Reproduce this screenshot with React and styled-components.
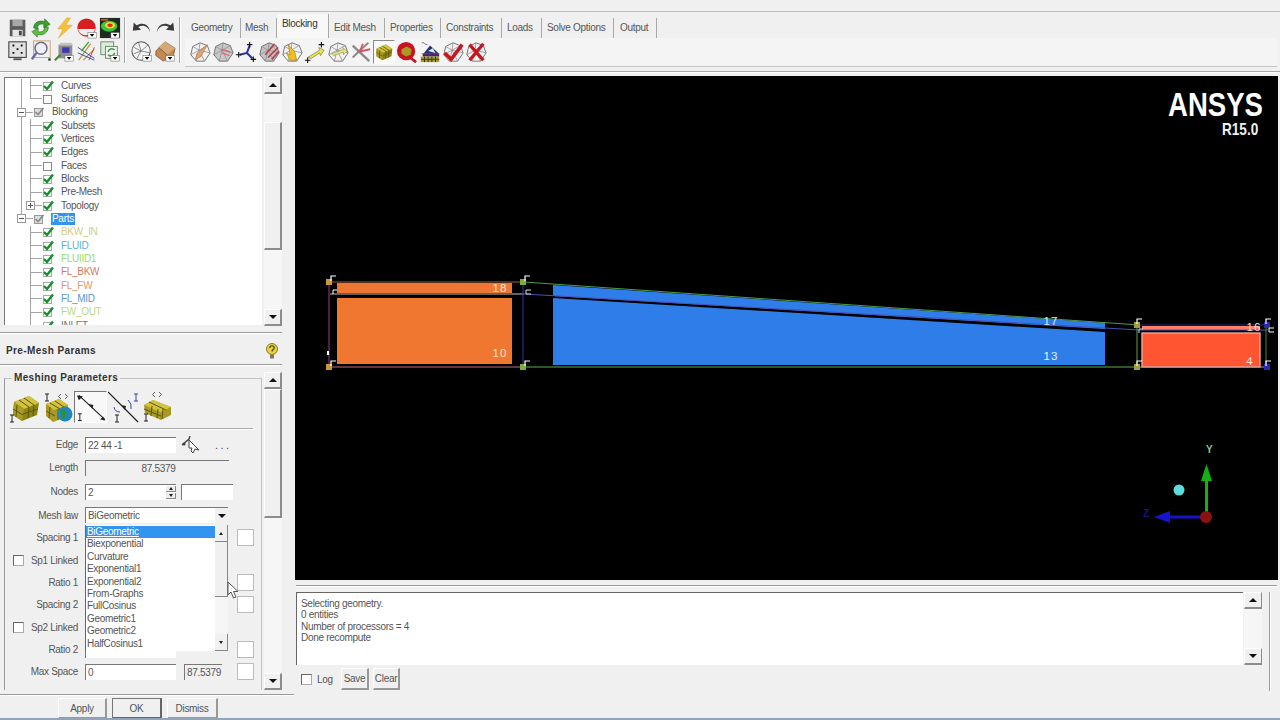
import React from 'react';
import styled, { createGlobalStyle } from 'styled-components';

const GlobalStyle = createGlobalStyle`
  html, body { margin: 0; padding: 0; background: #f0f0f0; }
  body { font-family: "Liberation Sans", Arial, sans-serif; font-size: 10px; letter-spacing: -0.3px; color: #4a4a4a; overflow: hidden; }
  * { box-sizing: border-box; }
`;

const Page = styled.div`
  width: 1280px;
  height: 720px;
  display: grid;
  grid-template-rows: 76px 642px 2px;
  overflow: hidden;
  background: #f0f0f0;
`;

/* ---------- top toolbar ---------- */
const TopBar = styled.div`
  margin-top: 11px;
  height: 61px;
  border-top: 1px solid #bcbcbc;
  border-bottom: 1px solid #a8a8a8;
  box-shadow: 0 1px 0 #fff;
  display: flex;
  padding-left: 6px;
`;
const IconGrid = styled.div`
  display: grid;
  grid-template-columns: repeat(${p => p.$cols}, 23px);
  grid-auto-rows: 23px;
  padding-top: 4px;
`;
const ToolBtn = styled.div`
  display: flex;
  align-items: center;
  justify-content: center;
  position: relative;
`;
const VSep = styled.div`
  width: 1px;
  height: 46px;
  margin: 5px ${p => p.$right}px 0 3px;
  background: #a6a6a6;
  box-shadow: 1px 0 0 #fff;
`;
const Ribbon = styled.div`
  display: flex;
  flex-direction: column;
`;
const TabBar = styled.div`
  display: flex;
  height: 26px;
  align-items: center;
  padding-top: 5px;
`;
const Tab = styled.div`
  width: ${p => p.$w}px;
  height: 20px;
  line-height: 20px;
  padding-left: ${p => p.$pad}px;
  border-right: 1px solid #a8a8a8;
  color: #555;
  white-space: nowrap;
  ${p => p.$active && `
    background: #f8f8f8;
    color: #333;
    margin-top: -4px;
    height: 24px;
    line-height: 20px;
  `}
`;
const RibbonIcons = styled.div`
  display: flex;
  gap: 1px;
  padding-left: 4px;
  height: 29px;
  width: 1092px;
  align-items: center;
  background: #f4f4f4;
  border-bottom: 1px solid #c4c4c4;
`;
const RibbonBtn = styled.div`
  width: 22px;
  height: 24px;
  display: flex;
  align-items: center;
  justify-content: center;
  ${p => p.$active && `border: 1px solid #888; border-right-color: #fff; border-bottom-color: #fff; background: #fafafa;`}
`;

/* ---------- main columns ---------- */
const Main = styled.div`
  display: grid;
  grid-template-columns: 295px 983px 2px;
  min-height: 0;
`;
const LeftCol = styled.div`
  display: flex;
  flex-direction: column;
  min-height: 0;
`;
const RightCol = styled.div`
  display: flex;
  flex-direction: column;
  min-height: 0;
`;
const HDivider = styled.div`
  height: 1px;
  margin: ${p => p.$top || 0}px ${p => p.$right || 13}px 0 ${p => p.$left || 0}px;
  background: #9a9a9a;
  box-shadow: 0 1px 0 #fff;
  flex: none;
`;

/* ---------- scrollbars ---------- */
const Scroll = styled.div`
  width: 18px;
  display: flex;
  flex-direction: column;
  background: #f6f6f6;
  flex: none;
`;
const ScrollBtn = styled.div`
  height: 17px;
  flex: none;
  display: flex;
  align-items: center;
  justify-content: center;
  background: #f0f0f0;
  border-top: 1px solid #fff;
  border-left: 1px solid #fff;
  border-right: 2px solid #8c8c8c;
  border-bottom: 2px solid #8c8c8c;
`;
const ScrollGap = styled.div`
  height: ${p => p.$h}px;
  flex: ${p => (p.$h ? 'none' : 1)};
`;
const ScrollThumb = styled.div`
  height: ${p => p.$h}px;
  flex: none;
  background: #f0f0f0;
  border-top: 1px solid #fff;
  border-left: 1px solid #fff;
  border-right: 2px solid #8c8c8c;
  border-bottom: 2px solid #8c8c8c;
`;
const Arrow = styled.div`
  width: 0;
  height: 0;
  border-left: 4px solid transparent;
  border-right: 4px solid transparent;
  ${p => (p.$up ? 'border-bottom: 4px solid #111;' : 'border-top: 4px solid #111;')}
`;

/* ---------- tree ---------- */
const TreeArea = styled.div`
  display: flex;
  gap: 2px;
  height: 250px;
  padding: 1px 0 0 4px;
  flex: none;
`;
const TreeBox = styled.div`
  width: 258px;
  height: 248px;
  padding-top: 1px;
  background: #fff;
  border-top: 1px solid #777;
  border-left: 1px solid #777;
  overflow: hidden;
`;
const line = (x, y, w, h) => `linear-gradient(#a4a4a4, #a4a4a4) ${x}px ${y} / ${w} ${h} no-repeat`;
const TreeRow = styled.div`
  height: 13.33px;
  display: flex;
  align-items: center;
  background: ${p => {
    const layers = [];
    if (p.$outer === 'full') layers.push(line(16, '0', '1px', '100%'));
    if (p.$outer === 'half') layers.push(line(16, '0', '1px', '50%'));
    if (p.$inner === 'full') layers.push(line(25, '0', '1px', '100%'));
    if (p.$inner === 'half') layers.push(line(25, '0', '1px', '50%'));
    if (p.$child) layers.push(line(25, '50%', '14px', '1px'));
    else layers.push(line(16, '50%', '13px', '1px'));
    return layers.join(', ');
  }};
`;
const Lead = styled.div`
  width: ${p => (p.$child ? 37 : 28)}px;
  padding-left: ${p => (p.$child ? 21 : 12)}px;
  height: 100%;
  display: flex;
  align-items: center;
  flex: none;
`;
const Expander = styled.div`
  width: 9px;
  height: 9px;
  border: 1px solid #999;
  background: #fff;
  display: flex;
  align-items: center;
  justify-content: center;
  position: relative;
  &::before { content: ''; width: 5px; height: 1px; background: #555; }
  ${p => p.$plus && `&::after { content: ''; position: absolute; width: 1px; height: 5px; background: #555; }`}
`;
const CheckSlot = styled.div`
  width: 12px;
  height: 12px;
  margin-right: 7px;
  flex: none;
  background: #fff;
`;
const TreeLabel = styled.span`
  color: ${p => p.$color || '#555'};
  padding: 0 1px;
  margin-left: -1px;
  line-height: 12px;
  white-space: nowrap;
  ${p => p.$selected && `background: #3394f0; color: #fff;`}
`;

const TreeCheck = ({ state }) => (
  <svg width="12" height="12" viewBox="0 0 12 12">
    {state === 'off' && <rect x="1.5" y="2.5" width="8" height="8" fill="#fff" stroke="#888" />}
    {state === 'on' && <>
      <rect x="1.5" y="2.5" width="8" height="8" fill="#fff" stroke="#aaa" />
      <path d="M2 6 L5 9 L11 1.5" fill="none" stroke="#12902c" strokeWidth="2.4" />
    </>}
    {state === 'mid' && <>
      <rect x="1.5" y="2.5" width="8" height="8" fill="#ddd" stroke="#999" />
      <path d="M2.5 6 L5 8.5 L10.5 2" fill="none" stroke="#888" strokeWidth="1.6" />
    </>}
  </svg>
);

const treeRows = [
  { label: 'Curves', state: 'on', child: true, outer: 'full', inner: 'full' },
  { label: 'Surfaces', state: 'off', child: true, outer: 'full', inner: 'half' },
  { label: 'Blocking', state: 'mid', exp: 'minus', outer: 'full' },
  { label: 'Subsets', state: 'on', child: true, outer: 'full', inner: 'full' },
  { label: 'Vertices', state: 'on', child: true, outer: 'full', inner: 'full' },
  { label: 'Edges', state: 'on', child: true, outer: 'full', inner: 'full' },
  { label: 'Faces', state: 'off', child: true, outer: 'full', inner: 'full' },
  { label: 'Blocks', state: 'on', child: true, outer: 'full', inner: 'full' },
  { label: 'Pre-Mesh', state: 'on', child: true, outer: 'full', inner: 'full' },
  { label: 'Topology', state: 'on', child: true, outer: 'full', inner: 'half', exp: 'plus' },
  { label: 'Parts', state: 'mid', exp: 'minus', outer: 'half', selected: true },
  { label: 'BKW_IN', state: 'on', child: true, inner: 'full', color: '#d3cd82' },
  { label: 'FLUID', state: 'on', child: true, inner: 'full', color: '#58b4cf' },
  { label: 'FLUIID1', state: 'on', child: true, inner: 'full', color: '#98dc6c' },
  { label: 'FL_BKW', state: 'on', child: true, inner: 'full', color: '#d27a5c' },
  { label: 'FL_FW', state: 'on', child: true, inner: 'full', color: '#de9a6c' },
  { label: 'FL_MID', state: 'on', child: true, inner: 'full', color: '#5c98cc' },
  { label: 'FW_OUT', state: 'on', child: true, inner: 'full', color: '#b6da7c' },
  { label: 'INLET', state: 'on', child: true, inner: 'full', color: '#777' },
];

/* ---------- params panel ---------- */
const ParamsTitle = styled.div`
  height: 31px;
  flex: none;
  display: flex;
  align-items: center;
  justify-content: space-between;
  padding: 4px 16px 0 6px;
  font-weight: bold;
  letter-spacing: 0.4px;
  color: #333;
`;
const ParamsArea = styled.div`
  display: flex;
  gap: 2px;
  height: 318px;
  margin-top: 7px;
  padding-left: 4px;
  flex: none;
`;
const Group = styled.fieldset`
  width: 258px;
  height: 318px;
  margin: 0;
  padding: 0;
  border: 1px solid #c2c2c2;
  border-bottom: none;
  border-left-color: #999;
  min-width: 0;
  position: relative;
`;
const GroupLegend = styled.legend`
  margin-left: 7px;
  padding: 0 2px;
  line-height: 12px;
  font-weight: bold;
  letter-spacing: 0.35px;
  color: #333;
`;
const ModeRow = styled.div`
  display: flex;
  height: 32px;
  margin-top: 7px;
  padding-left: 3px;
  gap: 0;
`;
const ModeBtn = styled.div`
  width: 33px;
  height: 32px;
  display: flex;
  align-items: center;
  justify-content: center;
  ${p => p.$active && `border: 1px solid #777; border-right-color: #fff; border-bottom-color: #fff; background: #f8f8f8;`}
`;
const GroupRule = styled.div`
  height: 1px;
  margin: 5px 8px 0 5px;
  background: #aaa;
  box-shadow: 0 1px 0 #fff;
`;
const Form = styled.div`
  position: relative;
  display: grid;
  grid-template-rows: 23px 23.5px 24px 23px 22.5px 22.5px 22px 22.5px 22.5px 22px 22px;
  margin-top: 4px;
  padding-right: 7px;
`;
const FormRow = styled.div`
  display: flex;
  align-items: center;
`;
const FormLabel = styled.div`
  width: 73px;
  margin-right: 7px;
  flex: none;
  display: flex;
  justify-content: ${p => (p.$check ? 'space-between' : 'flex-end')};
  align-items: center;
  color: #555;
  white-space: nowrap;
  padding-left: ${p => (p.$check ? 8 : 0)}px;
`;
const CheckBox = styled.div`
  width: 11px;
  height: 11px;
  flex: none;
  background: #fff;
  border: 1px solid #aaa;
  border-top-color: #666;
  border-left-color: #666;
`;
const Field = styled.div`
  width: ${p => p.$w || 91}px;
  height: 16px;
  line-height: 15px;
  padding-left: 2px;
  margin-left: ${p => p.$ml || 0}px;
  flex: none;
  background: ${p => (p.$readonly ? '#f0f0f0' : '#fff')};
  border-top: 1px solid #777;
  border-left: 1px solid #777;
  color: #555;
  white-space: nowrap;
  text-align: ${p => (p.$center ? 'center' : 'left')};
  position: relative;
  overflow: hidden;
`;
const Spinner = styled.div`
  position: absolute;
  right: 0;
  top: 0;
  width: 11px;
  height: 15px;
  display: flex;
  flex-direction: column;
  gap: 1px;
  padding: 1px 0 1px 1px;
`;
const SpinBtn = styled.div`
  flex: 1;
  display: flex;
  align-items: center;
  justify-content: center;
  background: #eee;
  border-bottom: 1px solid #888;
  border-right: 1px solid #888;
`;
const TinyArrow = styled.div`
  width: 0;
  height: 0;
  border-left: 2.5px solid transparent;
  border-right: 2.5px solid transparent;
  ${p => (p.$up ? 'border-bottom: 3px solid #222;' : 'border-top: 3px solid #222;')}
`;
const SideBox = styled.div`
  width: 17px;
  height: 17px;
  margin-left: auto;
  flex: none;
  background: #fff;
  border: 1px solid #bbb;
`;
const PickTools = styled.div`
  display: flex;
  align-items: center;
  margin-left: 5px;
  gap: 14px;
`;
const Dots = styled.span`
  letter-spacing: 2.5px;
  font-size: 11px;
  line-height: 8px;
  color: #444;
`;
const SelectArrow = styled.div`
  position: absolute;
  right: 0;
  top: 0;
  width: 13px;
  height: 15px;
  background: #f0f0f0;
  display: flex;
  align-items: center;
  justify-content: center;
`;
const Dropdown = styled.div`
  position: absolute;
  left: 80px;
  top: 92px;
  width: 143px;
  height: 126px;
  background: #fff;
  display: flex;
  border-left: 1px solid #666;
  z-index: 2;
`;
const DropList = styled.div`
  flex: 1;
  padding-top: 1px;
  min-width: 0;
`;
const DropItem = styled.div`
  height: 12.4px;
  line-height: 12.4px;
  padding-left: 1px;
  color: #555;
  ${p => p.$selected && `background: #3394f0; color: #fff; text-decoration: underline;`}
`;
const DropScroll = styled.div`
  width: 13px;
  display: flex;
  flex-direction: column;
  background: #f6f6f6;
`;
const DropBtn = styled.div`
  height: 17px;
  flex: none;
  display: flex;
  align-items: center;
  justify-content: center;
  background: #f0f0f0;
  border-right: 1px solid #888;
  border-bottom: 1px solid #888;
`;
const DropThumb = styled.div`
  height: 55px;
  flex: none;
  background: #f0f0f0;
  border-right: 1px solid #888;
  border-bottom: 1px solid #888;
`;
const DropGap = styled.div`
  flex: 1;
`;
const Cursor = styled.svg`
  position: absolute;
  left: 222px;
  top: 148px;
  z-index: 3;
`;
const ButtonRow = styled.div`
  display: flex;
  height: 21px;
  margin-top: 3px;
  padding-left: 58px;
  gap: 5px;
  flex: none;
`;
const PushBtn = styled.div`
  width: ${p => p.$w}px;
  height: ${p => p.$h || 21}px;
  margin-left: ${p => p.$ml || 0}px;
  flex: none;
  display: flex;
  align-items: center;
  justify-content: center;
  background: #f0f0f0;
  color: #555;
  border-top: 1px solid #fff;
  border-left: 1px solid #fff;
  border-right: 2px solid #999;
  border-bottom: 2px solid #999;
  ${p => p.$default && `border: 1px solid #777; border-right: 2px solid #666; border-bottom: 2px solid #666;`}
`;

/* ---------- viewport + messages ---------- */
const Viewport = styled.div`
  height: 504px;
  background: #000;
  flex: none;
`;
const ViewSvg = styled.svg`
  display: block;
  font-family: "Liberation Sans", Arial, sans-serif;
  letter-spacing: 0;
`;
const MsgArea = styled.div`
  display: flex;
  align-items: flex-start;
  margin-top: 6px;
  padding-left: 1px;
  height: 100px;
  flex: none;
`;
const MsgMain = styled.div`
  width: 974px;
  border-right: 1px solid #9a9a9a;
  box-shadow: 1px 0 0 #fff;
  height: 99px;
  padding-right: 7px;
  display: flex;
  flex-direction: column;
`;
const MsgTop = styled.div`
  display: flex;
  gap: 1px;
  height: 73px;
`;
const MsgBox = styled.div`
  width: 947px;
  background: #fff;
  border-top: 1px solid #666;
  border-left: 1px solid #666;
  padding: 5px 4px;
  line-height: 11.4px;
  color: #555;
`;
const MsgScrollBtn = styled(ScrollBtn)`
  border-right-width: 1px;
`;
const MsgTools = styled.div`
  display: flex;
  align-items: center;
  height: 22px;
  margin-top: 3px;
  padding-left: 5px;
`;
const LogLabel = styled.span`
  width: 24px;
  margin-left: 5px;
  flex: none;
  color: #555;
`;

/* ---------- drawn icons ---------- */
const Flag = () => (
  <>
    <rect x="13" y="17" width="9" height="6" fill="#fff" stroke="#555" strokeWidth=".5" />
    <path d="M15 18.5h5l-2.5 3z" fill="#000" />
  </>
);
const Ico = ({ size = 22, children }) => (
  <svg width={size} height={size} viewBox="0 0 24 24">{children}</svg>
);
const Wire = ({ shade = '#f2f2f2', children }) => (
  <Ico>
    <path d="M12 2 20 5 23 13 17 22 8 22 2 15 4 6Z" fill={shade} stroke="#6e6e6e" strokeWidth="1" />
    <path d="M4 6 11 10 20 5M11 10 8 22M11 10 23 13M2 15 11 10 17 22M12 2 11 10" fill="none" stroke="#8a8a8a" strokeWidth=".8" />
    {children}
  </Ico>
);
const Star = ({ x, y, r = 3 }) => (
  <path d={`M${x - r} ${y}H${x + r}M${x} ${y - r}V${y + r}`} stroke="#111" strokeWidth="1.2" />
);
const GoldCube = ({ size = 24 }) => (
  <svg width={size} height={size} viewBox="0 0 24 24">
    <path d="M3 8 14 3 22 8 21 17 10 22 3 17Z" fill="#8c8414" />
    <path d="M3 8 14 3 22 8 11 13Z" fill="#d2c23c" />
    <path d="M3 8 11 13 10 22 3 17Z" fill="#a89a24" />
    <path d="M6.5 6.5 14.5 11M10 5 18 10M7 10.5 6.5 19M3 12.5 10.5 17M14.5 11 14 20M18 9.5 17.5 18.5M11 16.5 21 12" stroke="#5c5608" strokeWidth=".9" fill="none" />
  </svg>
);

const toolIcons = [
  <Ico><rect x="3" y="3" width="17" height="18" fill="#5c5c5c" /><rect x="6" y="3" width="11" height="7" fill="#a8a8a8" /><rect x="6" y="14" width="11" height="7" fill="#e6e6e6" /><rect x="13" y="15" width="3" height="5" fill="#444" /></Ico>,
  <Ico><path d="M4 12C4 6 10 3 16 5V2l6 6-7 4V8C11 7 8 9 8 13z" fill="#3aa02e" stroke="#1d6a1a" strokeWidth=".6" /><path d="M20 11c0 6-6 10-12 8v3l-6-6 7-4v4c4 1 7-1 7-5z" fill="#62bd3f" stroke="#1d6a1a" strokeWidth=".6" /></Ico>,
  <Ico><path d="M15 1 5 13h6L6 23l15-14h-7l5-8z" fill="#f4c13e" stroke="#e6a628" strokeWidth=".6" /></Ico>,
  <Ico><circle cx="11.5" cy="11.5" r="10" fill="#d81f1f" /><path d="M2 13h19a10 10 0 0 1-19 0z" fill="#eee" /><Flag /></Ico>,
  <Ico><rect x="1" y="1" width="22" height="22" fill="#1c2c20" /><ellipse cx="11" cy="10" rx="9" ry="6" fill="#3fbf3a" /><ellipse cx="12" cy="9" rx="5.5" ry="3.5" fill="#e8e02a" /><ellipse cx="12" cy="9" rx="3" ry="1.8" fill="#e8261e" /><path d="M2 3h8" stroke="#e24a1e" strokeWidth="2" /><Flag /></Ico>,
  <Ico><rect x="2" y="2" width="19" height="17" fill="#e2e2e2" stroke="#444" strokeWidth="1.2" /><rect x="7" y="20" width="9" height="2" fill="#555" /><path d="M6 5h2v2H6zM15 5h2v2h-2zM6 13h2v2H6zM15 13h2v2h-2zM10.5 9h2v2h-2z" fill="#111" /></Ico>,
  <Ico><rect x="4" y="1" width="18" height="18" fill="none" stroke="#c68a4a" strokeWidth=".8" /><circle cx="12" cy="9" r="6.5" fill="#eef0f6" stroke="#6d6d86" strokeWidth="1.6" /><path d="M7 14 2 21" stroke="#6666aa" strokeWidth="2.6" /><rect x="20" y="20" width="2.5" height="2.5" fill="#222" /></Ico>,
  <Ico><path d="M6 5h15v15H6z" fill="#8e8e8e" /><path d="M8 3h12l2 3H7z" fill="#c4c4c4" /><rect x="10" y="8" width="8" height="6" fill="#3a3ab0" /><path d="M2 22 8 16" stroke="#3a8a2a" strokeWidth="2.2" /><Flag /></Ico>,
  <Ico><path d="M3 22 16 4M8 22 20 10" stroke="#d08a2a" strokeWidth="1.2" /><path d="M2 8 20 20M2 14l18 8" stroke="#2a48aa" strokeWidth="1" /><path d="M6 12 14 2" stroke="#3aa02e" strokeWidth="1.4" /><path d="M14 22l6-14" stroke="#c43a3a" strokeWidth="1" /></Ico>,
  <Ico><rect x="2" y="2" width="14" height="14" fill="#dcebdc" stroke="#6a8a6a" /><rect x="7" y="7" width="13" height="13" fill="#f0f0f0" stroke="#6a8a6a" /><path d="M10 13a4 4 0 0 1 7-2M17 14a4 4 0 0 1-7 2" stroke="#3a9a3a" strokeWidth="1.6" fill="none" /><Flag /></Ico>,
];
const undoIcons = [
  <Ico><path d="M21 17C19 10 13 8 8 11l3 3-9 1 1-9 3 3c7-4 14-1 15 8z" fill="#3a3a3a" /></Ico>,
  <Ico><path d="M3 17C5 10 11 8 16 11l-3 3 9 1-1-9-3 3C11 5 4 8 3 17z" fill="#3a3a3a" /></Ico>,
  <Ico><circle cx="11" cy="12" r="10" fill="#f4f4f4" stroke="#555" strokeWidth="1.1" /><path d="M3 8 11 12 19 5M11 12 6 21M11 12l10 2M8 2l3 10M3 15l8-3" fill="none" stroke="#666" strokeWidth=".8" /><Flag /></Ico>,
  <Ico><path d="M2 12 12 2 23 9 21 18 10 23 2 17Z" fill="#c08a52" stroke="#6a4422" strokeWidth=".7" /><path d="M12 2 23 9 14 16 5 8Z" fill="#d6a878" /><path d="M5 8 14 16M14 16v7" stroke="#6a4422" strokeWidth=".7" /><Flag /></Ico>,
];
const ribbonIcons = [
  <Wire><path d="M20 4 9 13 7 20 13 17Z" fill="#d8a878" stroke="#b87a3c" strokeWidth=".8" /></Wire>,
  <Wire shade="#c8c8c8"><path d="M10 9 20 12M11 13l8 3" stroke="#d8707a" strokeWidth="1.6" /></Wire>,
  <Ico><path d="M16 5 13 13 5 15M13 13l6 6" fill="none" stroke="#2a34a8" strokeWidth="2.2" /><Star x={16} y={4} /><Star x={4} y={15} /><Star x={20} y={20} /></Ico>,
  <Wire shade="#c4c4c4"><path d="M8 15 18 3M11 18 22 7M15 20 23 11" stroke="#b8404a" strokeWidth="1.8" /></Wire>,
  <Wire><path d="M8 4 15 12 17 21H10L6 13l4 2z" fill="#f0c020" stroke="#a87a10" strokeWidth=".7" /></Wire>,
  <Ico><path d="M4 18 17 10l-1-3 6 3-4 6-1-3-9 6z" fill="#e8e060" stroke="#7a7a20" strokeWidth=".7" /><Star x={19} y={4} /><Star x={4} y={21} /></Ico>,
  <Wire><path d="M5 14 18 9l-1-2 5 4-4 4v-3L7 16z" fill="#e4e48a" stroke="#8a8a30" strokeWidth=".6" /></Wire>,
  <Ico><path d="M3 5 21 22" stroke="#8a8a8a" strokeWidth="2.6" /><path d="M20 2 9 12" stroke="#8a8a8a" strokeWidth="2.2" /><path d="M8 12 22 9M14 3l-3 8" stroke="#d8565a" strokeWidth="2" /><path d="M9 12 3 18" stroke="#888" strokeWidth="2.2" /></Ico>,
  <GoldCube size={22} />,
  <Ico><circle cx="11" cy="11" r="10" fill="#c8141e" /><path d="M15 18l7 5" stroke="#c8141e" strokeWidth="3" /><path d="M6 9 12 6 17 9 16 15 11 17 6 14Z" fill="#a89a24" /></Ico>,
  <Ico><path d="M3 2c3-1 3 2 6 2" stroke="#666" strokeWidth="1" fill="none" /><path d="M4 15 12 5 22 14v3H4z" fill="#23307c" /><path d="M10 11 15 8 18 13Z" fill="#e8e8f4" /><path d="M3 14h19" stroke="#c8242a" strokeWidth="1" /><rect x="2" y="17" width="20" height="6" fill="#a89a24" /><path d="M6 17v6M10 17v6M14 17v6M18 17v6M2 20h20" stroke="#2a2608" strokeWidth=".9" /></Ico>,
  <Wire><path d="M3 13 10 20 22 4" fill="none" stroke="#c8141e" strokeWidth="3.8" /></Wire>,
  <Wire><path d="M5 4 20 21M20 3 5 21" fill="none" stroke="#c8141e" strokeWidth="3.6" /></Wire>,
];

const Beam = ({ x, y, color = '#222' }) => (
  <path d={`M${x - 2} ${y}h4M${x} ${y}v7M${x - 2} ${y + 7}h4`} stroke={color} strokeWidth="1" fill="none" />
);
const Chev = ({ x, y }) => (
  <path d={`M${x} ${y}l-2.5 2.5 2.5 2.5M${x + 4} ${y}l2.5 2.5-2.5 2.5`} stroke="#333" strokeWidth=".8" fill="none" />
);
const modeIcons = [
  <svg width="32" height="32" viewBox="0 0 32 32">
    <path d="M5 11 20 5 30 12 28 24 13 30 4 24Z" fill="#8c8414" /><path d="M5 11 20 5 30 12 15 18Z" fill="#d2c23c" />
    <path d="M5 11 15 18 13 30 4 24Z" fill="#a89a24" />
    <path d="M10 9 20 16M15 7 25 14M8 14 7 26M4 18 14 24M20 16 19 27M25 14 24 25M14 23 29 18" stroke="#5c5608" fill="none" />
    <Beam x={3} y={24} />
  </svg>,
  <svg width="32" height="32" viewBox="0 0 32 32">
    <path d="M4 13 17 8 26 14 24 26 11 31 4 25Z" fill="#a89a24" /><path d="M4 13 17 8 26 14 12 19Z" fill="#d2c23c" />
    <path d="M8 12 18 18M13 10 22 16M8 16 7 27M4 20 13 25M16 18V29" stroke="#5c5608" fill="none" />
    <circle cx="23" cy="23" r="7.5" fill="#1c8ab8" /><path d="M20 18c3 1 5 3 4 6s-3 3-3 5c-2-3-3-7-1-11z" fill="#3a8a3a" />
    <Beam x={5} y={3} /><Chev x={19} y={3} />
  </svg>,
  <svg width="32" height="32" viewBox="0 0 32 32">
    <path d="M4 4 31 29" stroke="#222" strokeWidth="1.2" /><path d="M8 5 4 9 2 4zM14 13l5 1-1 4zM29 26l2 4-5-1z" fill="#222" />
    <Beam x={5} y={23} />
  </svg>,
  <svg width="32" height="32" viewBox="0 0 32 32">
    <path d="M0 1 30 31" stroke="#222" strokeWidth="1.2" /><path d="M13 14l5 1-1 4z" fill="#222" />
    <path d="M6 16a6 6 0 0 0 6 5M20 9a9 9 0 0 1 3 9" stroke="#3a44a8" fill="none" />
    <Beam x={28} y={3} color="#3a44a8" /><Beam x={9} y={24} />
  </svg>,
  <svg width="32" height="32" viewBox="0 0 32 32">
    <path d="M3 14 12 9 30 16 30 24 20 29 4 22Z" fill="#a89a24" /><path d="M3 14 12 9 30 16 20 21Z" fill="#d2c23c" />
    <path d="M8 11 25 19M3 18 20 25M11 15 10 25M17 18 16 27M22 18 21 28" stroke="#5c5608" fill="none" />
    <Chev x={14} y={1} /><Beam x={5} y={23} />
  </svg>,
];

const Vertex = ({ x, y, color, mx = 2, my = -6 }) => (
  <>
    <rect x={x - 3} y={y - 3} width="6" height="6" fill={color} />
    <path d={`M${x + mx + 5} ${y + my}h-5v5`} fill="none" stroke="#fff" strokeWidth="1.2" />
  </>
);
const Num = ({ x, y, fill = '#ffe6d4', children }) => (
  <text x={x} y={y} fontSize="11.5" fill={fill} textAnchor="middle" letterSpacing="1">{children}</text>
);

const Scene = () => (
  <ViewSvg width="983" height="504" viewBox="295 76 983 504">
    <rect x="337" y="283" width="175" height="10" fill="#ee7833" />
    <rect x="337" y="298" width="175" height="66" fill="#f0772f" />
    <path d="M553 285 1105 323V329L553 296Z" fill="#2f7de8" />
    <path d="M553 298 1105 332V365H553Z" fill="#2f7de8" />
    <rect x="1142" y="326" width="118" height="4" fill="#ff7f6a" />
    <rect x="1142" y="333" width="118" height="34" fill="#ff5530" stroke="#e8a89c" strokeWidth="1.4" />

    <path d="M330 282H524" stroke="#a85a30" />
    <path d="M524 282 1139 325" stroke="#4f9a4a" />
    <path d="M1139 325H1268" stroke="#20307a" />
    <path d="M330 294H524" stroke="#c8c0c0" />
    <path d="M524 294 1139 330H1268" stroke="#4a50b8" fill="none" />
    <path d="M330 367H524" stroke="#c46a80" />
    <path d="M524 367H1139" stroke="#58b050" />
    <path d="M1139 367H1268" stroke="#c88a80" />
    <path d="M329 282V367" stroke="#a03a90" />
    <path d="M523 282V367" stroke="#3a32b0" />
    <path d="M1137 325V367" stroke="#58a050" />
    <path d="M1266 325V367" stroke="#3a8a30" />

    <Vertex x={329} y={282} color="#c89a3a" />
    <path d="M337 290h-4v4" fill="none" stroke="#fff" />
    <Vertex x={329} y={367} color="#c89a3a" />
    <rect x="327" y="351" width="2" height="4" fill="#fff" />
    <Vertex x={523} y={282} color="#7ab03a" />
    <path d="M531 290h-5v4h5" fill="none" stroke="#ddd" />
    <Vertex x={523} y={367} color="#7ab03a" />
    <Vertex x={1137} y={325} color="#a0a03a" mx={0} />
    <path d="M1143 329h-4v4" fill="none" stroke="#ddd" />
    <Vertex x={1137} y={367} color="#a0a03a" mx={0} />
    <Vertex x={1267} y={325} color="#2a2ab0" mx={-1} />
    <path d="M1274 328h-5v4h5" fill="none" stroke="#fff" />
    <Vertex x={1267} y={367} color="#2a2ab0" mx={-1} />

    <Num x={500} y={292}>18</Num>
    <Num x={500} y={357}>10</Num>
    <Num x={1051} y={325} fill="#d8e8f8">17</Num>
    <Num x={1051} y={360} fill="#e8f0ff">13</Num>
    <Num x={1254} y={331} fill="#f4dcd4">16</Num>
    <Num x={1250} y={365} fill="#ffe6dc">4</Num>

    <g transform="translate(1168 116) scale(.835 1)">
      <text fontSize="33" fontWeight="bold" fill="#fff">ANSYS</text>
    </g>
    <g transform="translate(1222 135) scale(.85 1)">
      <text fontSize="16" fontWeight="bold" fill="#f0f0f0">R15.0</text>
    </g>

    <circle cx="1179" cy="490" r="5.5" fill="#5cdcdc" />
    <path d="M1206.5 512V480" stroke="#18b018" strokeWidth="3" />
    <path d="M1206.5 464 1201 481H1212Z" fill="#12b012" />
    <path d="M1207 517H1170" stroke="#1414c8" strokeWidth="3" />
    <path d="M1154 517 1170 511V523Z" fill="#1414c8" />
    <circle cx="1206" cy="517" r="6" fill="#8c1212" />
    <text x="1206" y="453" fontSize="10" fontWeight="bold" fill="#8ac88a">Y</text>
    <text x="1143" y="517" fontSize="10" fontWeight="bold" fill="#15158a">Z</text>
  </ViewSvg>
);

const BottomStrip = styled.div`
  background: #94a4b8;
`;

const dropItems = ['BiGeometric', 'Biexponential', 'Curvature', 'Exponential1', 'Exponential2', 'From-Graphs', 'FullCosinus', 'Geometric1', 'Geometric2', 'HalfCosinus1'];
const tabs = [
  { label: 'Geometry', w: 56, pad: 6 },
  { label: 'Mesh', w: 36, pad: 4 },
  { label: 'Blocking', w: 52, pad: 5 },
  { label: 'Edit Mesh', w: 56, pad: 5 },
  { label: 'Properties', w: 56, pad: 5 },
  { label: 'Constraints', w: 61, pad: 5 },
  { label: 'Loads', w: 40, pad: 5 },
  { label: 'Solve Options', w: 72, pad: 5 },
  { label: 'Output', w: 43, pad: 6 },
];

const App = () => (
  <Page>
    <GlobalStyle />
    <TopBar>
      <IconGrid $cols={5}>
        {toolIcons.map((icon, i) => <ToolBtn key={i}>{icon}</ToolBtn>)}
      </IconGrid>
      <VSep $right={5} />
      <IconGrid $cols={2}>
        {undoIcons.map((icon, i) => <ToolBtn key={i}>{icon}</ToolBtn>)}
      </IconGrid>
      <VSep $right={5} />
      <Ribbon>
        <TabBar>
          {tabs.map(t => (
            <Tab key={t.label} $w={t.w} $pad={t.pad} $active={t.label === 'Blocking'}>{t.label}</Tab>
          ))}
        </TabBar>
        <RibbonIcons>
          {ribbonIcons.map((icon, i) => <RibbonBtn key={i} $active={i === 8}>{icon}</RibbonBtn>)}
        </RibbonIcons>
      </Ribbon>
    </TopBar>

    <Main>
      <LeftCol>
        <TreeArea>
          <TreeBox>
            {treeRows.map(row => (
              <TreeRow key={row.label} $outer={row.outer} $inner={row.inner} $child={row.child}>
                <Lead $child={row.child}>
                  {row.exp && <Expander $plus={row.exp === 'plus'} />}
                </Lead>
                <CheckSlot><TreeCheck state={row.state} /></CheckSlot>
                <TreeLabel $color={row.color} $selected={row.selected}>{row.label}</TreeLabel>
              </TreeRow>
            ))}
          </TreeBox>
          <Scroll>
            <ScrollBtn><Arrow $up /></ScrollBtn>
            <ScrollGap $h={28} />
            <ScrollThumb $h={128} />
            <ScrollGap />
            <ScrollBtn><Arrow /></ScrollBtn>
          </Scroll>
        </TreeArea>

        <HDivider $top={6} />
        <ParamsTitle>
          <span>Pre-Mesh Params</span>
          <svg width="14" height="18" viewBox="0 0 14 18">
            <circle cx="7" cy="7" r="5.5" fill="#e8d040" stroke="#8a7a20" />
            <path d="M4.8 6c0-3 4.4-3 4.4 0 0 1.6-2.2 1.6-2.2 3.4" fill="none" stroke="#4a4010" strokeWidth="1.2" />
            <rect x="5" y="13" width="4" height="3.5" fill="#7a7a60" />
          </svg>
        </ParamsTitle>
        <HDivider />
        <ParamsArea>
          <Group>
            <GroupLegend>Meshing Parameters</GroupLegend>
            <ModeRow>
              {modeIcons.map((icon, i) => <ModeBtn key={i} $active={i === 2}>{icon}</ModeBtn>)}
            </ModeRow>
            <GroupRule />
            <Form>
              <FormRow>
                <FormLabel>Edge</FormLabel>
                <Field>22 44 -1</Field>
                <PickTools>
                  <svg width="20" height="18" viewBox="0 0 20 18">
                    <path d="M8 4 18 14 14 13 12 17 10 15 11 12 8 12Z" fill="#fff" stroke="#444" />
                    <path d="M1 9 8 3l1-3" stroke="#444" strokeWidth="1.4" fill="none" />
                    <circle cx="3" cy="8" r="1.6" fill="#444" />
                  </svg>
                  <Dots>...</Dots>
                </PickTools>
              </FormRow>
              <FormRow>
                <FormLabel>Length</FormLabel>
                <Field $w={144} $readonly $center>87.5379</Field>
              </FormRow>
              <FormRow>
                <FormLabel>Nodes</FormLabel>
                <Field>
                  2
                  <Spinner>
                    <SpinBtn><TinyArrow $up /></SpinBtn>
                    <SpinBtn><TinyArrow /></SpinBtn>
                  </Spinner>
                </Field>
                <Field $w={52} $ml={5} />
              </FormRow>
              <FormRow>
                <FormLabel>Mesh law</FormLabel>
                <Field $w={143}>
                  BiGeometric
                  <SelectArrow><Arrow /></SelectArrow>
                </Field>
              </FormRow>
              <FormRow>
                <FormLabel>Spacing 1</FormLabel>
                <Field />
                <SideBox />
              </FormRow>
              <FormRow>
                <FormLabel $check><CheckBox />Sp1 Linked</FormLabel>
              </FormRow>
              <FormRow>
                <FormLabel>Ratio 1</FormLabel>
                <Field />
                <SideBox />
              </FormRow>
              <FormRow>
                <FormLabel>Spacing 2</FormLabel>
                <Field />
                <SideBox />
              </FormRow>
              <FormRow>
                <FormLabel $check><CheckBox />Sp2 Linked</FormLabel>
              </FormRow>
              <FormRow>
                <FormLabel>Ratio 2</FormLabel>
                <Field />
                <SideBox />
              </FormRow>
              <FormRow>
                <FormLabel>Max Space</FormLabel>
                <Field>0</Field>
                <Field $w={38} $ml={8} $readonly>87.5379</Field>
                <SideBox />
              </FormRow>

              <Dropdown>
                <DropList>
                  {dropItems.map((item, i) => <DropItem key={item} $selected={i === 0}>{item}</DropItem>)}
                </DropList>
                <DropScroll>
                  <DropBtn><TinyArrow $up /></DropBtn>
                  <DropThumb />
                  <DropGap />
                  <DropBtn><TinyArrow /></DropBtn>
                </DropScroll>
              </Dropdown>
              <Cursor width="12" height="18" viewBox="0 0 12 18">
                <path d="M1 1V14L4 11 6.5 17 9 16 6.5 10.5H11Z" fill="#fff" stroke="#555" />
              </Cursor>
            </Form>
          </Group>
          <Scroll>
            <ScrollBtn><Arrow $up /></ScrollBtn>
            <ScrollThumb $h={129} />
            <ScrollGap />
            <ScrollBtn><Arrow /></ScrollBtn>
          </Scroll>
        </ParamsArea>
        <HDivider $top={4} $right={1} />
        <ButtonRow>
          <PushBtn $w={49}>Apply</PushBtn>
          <PushBtn $w={50} $default>OK</PushBtn>
          <PushBtn $w={51}>Dismiss</PushBtn>
        </ButtonRow>
      </LeftCol>

      <RightCol>
        <Viewport><Scene /></Viewport>
        <HDivider $top={5} $right={1} $left={1} />
        <MsgArea>
          <MsgMain>
            <MsgTop>
              <MsgBox>
                Selecting geometry.<br />
                0 entities<br />
                Number of processors = 4<br />
                Done recompute
              </MsgBox>
              <Scroll>
                <MsgScrollBtn><Arrow $up /></MsgScrollBtn>
                <ScrollGap />
                <MsgScrollBtn><Arrow /></MsgScrollBtn>
              </Scroll>
            </MsgTop>
            <MsgTools>
              <CheckBox />
              <LogLabel>Log</LogLabel>
              <PushBtn $w={28} $h={22}>Save</PushBtn>
              <PushBtn $w={27} $h={22} $ml={4}>Clear</PushBtn>
            </MsgTools>
          </MsgMain>
        </MsgArea>
      </RightCol>
    </Main>
    <BottomStrip />
  </Page>
);

export default App;
